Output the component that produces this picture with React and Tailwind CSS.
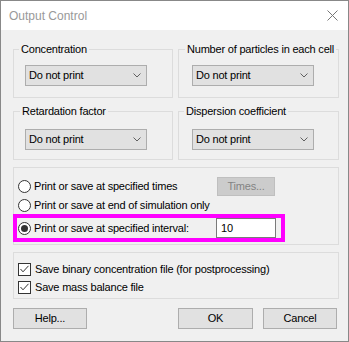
function Combo() {
  return (
    <div className="w-[122px] h-[21px] bg-[#e1e1e1] border border-[#adadad] flex items-center justify-between pl-[3px] pr-[5px]">
      <span>Do not print</span>
      <svg width="8" height="5" viewBox="0 0 8 5">
        <path d="M0.5 0.5 L4 4 L7.5 0.5" stroke="#606060" strokeWidth="1" fill="none" />
      </svg>
    </div>
  );
}

function Radio({ checked }) {
  return (
    <div className="w-[13px] h-[13px] shrink-0 rounded-full border border-[#333333] bg-white flex items-center justify-center">
      {checked && <div className="w-[7px] h-[7px] rounded-full bg-[#333333]" />}
    </div>
  );
}

function Check() {
  return (
    <div className="w-[13px] h-[13px] shrink-0 border border-[#333333] bg-white flex items-center justify-center">
      <svg width="11" height="11" viewBox="0 0 11 11">
        <path d="M1.5 5 L4 7.8 L9.5 1.8" stroke="#333333" strokeWidth="1" fill="none" />
      </svg>
    </div>
  );
}

function Group({ label, legendClass, bodyClass }) {
  return (
    <fieldset className="border border-[#dcdcdc] m-0 p-0 min-w-0">
      <legend className={`${legendClass} px-[2px] leading-[15px]`}>{label}</legend>
      <div className={bodyClass}>
        <Combo />
      </div>
    </fieldset>
  );
}

export default function App() {
  return (
    <div className="w-[349px] h-[342px] border border-[#888888] bg-[#f0f0f0] flex flex-col font-['Liberation_Sans',Arial,sans-serif] text-[11px] leading-[13px] tracking-[-0.2px] text-black">
      <div className="h-[29px] shrink-0 bg-white flex items-center justify-between pl-[8px] pr-[10px]">
        <span className="text-[12px] leading-[14px] tracking-normal text-[#999999]">Output Control</span>
        <svg width="11" height="11" viewBox="0 0 11 11">
          <path d="M0.5 0.5 L10.5 10.5 M10.5 0.5 L0.5 10.5" stroke="#777777" strokeWidth="1" fill="none" />
        </svg>
      </div>
      <div className="flex flex-col pl-[12px] pr-[9px] pt-[12px]">
        <div className="grid grid-cols-[160px_161px] gap-x-[5px]">
          <Group label="Concentration" legendClass="ml-[5px]" bodyClass="pl-[11px] pt-[8px] pb-[11px]" />
          <Group label="Number of particles in each cell" legendClass="ml-[6px]" bodyClass="pl-[13px] pt-[8px] pb-[11px]" />
        </div>
        <div className="grid grid-cols-[160px_161px] gap-x-[5px] mt-[6px]">
          <Group label="Retardation factor" legendClass="ml-[6px]" bodyClass="pl-[11px] pt-[10px] pb-[9px]" />
          <Group label="Dispersion coefficient" legendClass="ml-[5px]" bodyClass="pl-[13px] pt-[10px] pb-[9px]" />
        </div>

        <div className="relative mt-[7px] h-[78px] border border-[#dcdcdc] pl-[4px] pt-[9px] flex flex-col">
          <div className="flex items-center h-[19px]">
            <div className="w-[199px] flex items-center gap-[3px]">
              <Radio />
              <span>Print or save at specified times</span>
            </div>
            <div className="w-[58px] h-[19px] bg-[#cccccc] border border-[#bfbfbf] text-[#838383] flex items-center justify-center">
              Times...
            </div>
          </div>
          <div className="flex items-center h-[16px] mt-[1px] gap-[3px]">
            <Radio />
            <span>Print or save at end of simulation only</span>
          </div>
          <div className="flex items-center h-[20px] mt-[5px]">
            <div className="w-[198px] flex items-center gap-[3px]">
              <Radio checked />
              <span>Print or save at specified interval:</span>
            </div>
            <div className="w-[60px] h-[20px] bg-white border border-[#7a7a7a] flex items-center pl-[4px]">10</div>
          </div>
          <div className="absolute left-[-1px] top-[46px] w-[272px] h-[28px] border-[4px] border-[#ff00ff]" />
        </div>

        <div className="mt-[7px] h-[47px] border border-[#dcdcdc] pl-[4px] pt-[7px] flex flex-col">
          <div className="flex items-center h-[18px] gap-[4px]">
            <Check />
            <span>Save binary concentration file (for postprocessing)</span>
          </div>
          <div className="flex items-center h-[18px] gap-[4px]">
            <Check />
            <span>Save mass balance file</span>
          </div>
        </div>

        <div className="mt-[9px] flex items-center pr-[2px]">
          <div className="w-[74px] h-[21px] bg-[#e1e1e1] border border-[#adadad] flex items-center justify-center">Help...</div>
          <div className="ml-auto w-[75px] h-[21px] bg-[#e1e1e1] border border-[#adadad] flex items-center justify-center">OK</div>
          <div className="ml-[10px] w-[74px] h-[21px] bg-[#e1e1e1] border border-[#adadad] flex items-center justify-center">Cancel</div>
        </div>
      </div>
    </div>
  );
}
